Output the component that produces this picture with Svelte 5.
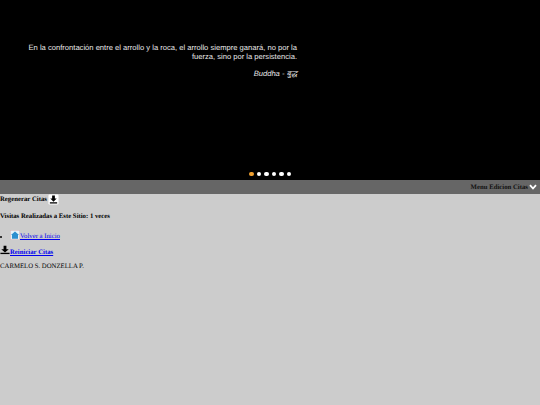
<script lang="ts">
	const dots = [0, 1, 2, 3, 4, 5];
	const active = 0;
</script>

<section class="hero">
	<blockquote class="quote">
		<p class="quote-text">En la confrontación entre el arrollo y la roca, el arrollo siempre ganará, no por la fuerza, sino por la persistencia.</p>
		<p class="quote-author">Buddha - बुद्ध</p>
	</blockquote>
	<div class="dots">
		{#each dots as d}
			<span class="dot" class:active={d === active}></span>
		{/each}
	</div>
</section>

<div class="menu-bar">
	<span class="menu-label">Menu Edicion Citas</span>
	<svg class="chevron" viewBox="0 0 10 8" width="8" height="6">
		<path d="M1 1.5 L5 6 L9 1.5" fill="none" stroke="#fff" stroke-width="2.4" />
	</svg>
</div>

<main class="content">
	<div class="regen">
		<strong>Regenerar Citas</strong>
		<svg class="dl-box" viewBox="0 0 12 12" width="11" height="11">
			<rect x="0.5" y="0.5" width="11" height="11" rx="1.5" fill="#fff" />
			<path d="M4.5 1.5 H7.5 V5 H9.5 L6 8.5 L2.5 5 H4.5 Z" fill="#000" />
			<rect x="2" y="9" width="8" height="1.4" fill="#000" />
		</svg>
	</div>
	<p class="visits">Visitas Realizadas a Este Sitio: 1 veces</p>
	<ul class="links">
		<li>
			<svg class="home" viewBox="0 0 10 10" width="10" height="10">
				<rect x="0.3" y="0.3" width="9.4" height="9.4" rx="1" fill="#e8f2fa" stroke="#d9a0a0" stroke-width="0.5" />
				<path d="M5 1.5 L9 5 H8 V8.8 H2 V5 H1 Z" fill="#2f8fd0" />
			</svg><a href="#inicio">Volver a Inicio</a>
		</li>
	</ul>
	<div class="reset">
		<svg viewBox="0 0 12 11" width="10" height="10">
			<path d="M4.3 0.5 H7.7 V4.5 H10.5 L6 8.5 L1.5 4.5 H4.3 Z" fill="#000" />
			<rect x="0.5" y="8.8" width="11" height="1.6" fill="#000" />
		</svg><a href="#reiniciar"><strong>Reiniciar Citas</strong></a>
	</div>
	<p class="signature">CARMELO S. DONZELLA P.</p>
</main>

<style>
	:global(body) {
		background: #cccccc;
		text-rendering: geometricPrecision;
	}

	.hero {
		height: 180px;
		background: #000;
		position: relative;
		padding-top: 43px;
		box-sizing: border-box;
	}

	.quote {
		width: 269px;
		margin: 0 0 0 28px;
		text-align: right;
		font-family: "Liberation Sans", Arial, sans-serif;
		font-size: 7.6px;
		line-height: 9px;
		color: #e8e8e8;
	}

	.quote-text {
		margin: 0;
	}

	.quote-author {
		margin: 8px 0 0;
		font-style: italic;
	}

	.dots {
		position: absolute;
		left: 249px;
		top: 171.5px;
		display: flex;
		gap: 3px;
	}

	.dot {
		width: 4.5px;
		height: 4.5px;
		border-radius: 50%;
		background: #fff;
	}

	.dot.active {
		background: #f0a030;
	}

	.menu-bar {
		height: 14px;
		background: #666666;
		display: flex;
		align-items: center;
		justify-content: flex-end;
		gap: 1px;
		padding-right: 3px;
		font-family: "Liberation Serif", "Times New Roman", serif;
		font-size: 6.75px;
		font-weight: 700;
		color: #111;
	}

	.content {
		font-family: "Liberation Serif", "Times New Roman", serif;
		font-size: 6.75px;
		color: #000;
	}

	.regen {
		display: flex;
		align-items: center;
		gap: 1px;
		height: 11px;
	}

	.visits {
		margin: 8px 0 0;
		font-weight: 700;
		line-height: 8px;
	}

	.links {
		margin: 8.5px 0 0;
		padding-left: 10px;
	}

	.links li {
		line-height: 10px;
	}

	.home {
		vertical-align: -2px;
	}

	a {
		color: #0000ee;
	}

	.reset {
		margin-top: 3px;
		line-height: 10px;
	}

	.reset svg {
		vertical-align: -1px;
	}

	.signature {
		margin: 5.5px 0 0;
		line-height: 8px;
	}
</style>
